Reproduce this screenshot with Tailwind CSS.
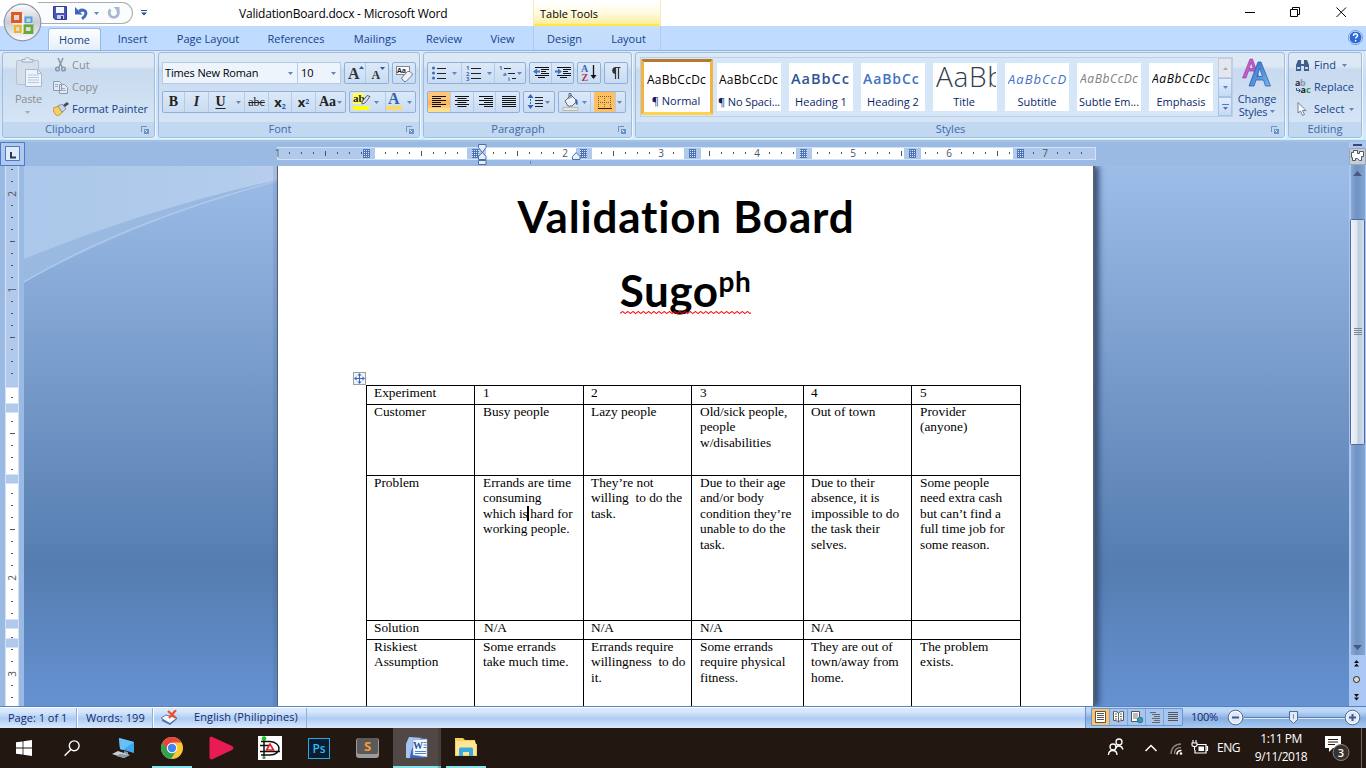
<!DOCTYPE html>
<html lang="en">
<head>
<meta charset="utf-8">
<title>ValidationBoard.docx - Microsoft Word</title>
<script src="https://cdn.jsdelivr.net/npm/@tailwindcss/browser@4"></script>
</head>
<body class="w-[1366px] h-[768px] overflow-hidden flex flex-col font-['Open_Sans',sans-serif] text-[11px] leading-[14px] text-[#15428b] whitespace-nowrap select-none">

<!-- shared shapes -->
<svg width="0" height="0" class="absolute">
  <defs>
    <symbol id="dd" viewBox="0 0 5 3"><path d="M0 0h5L2.500 3z" fill="#5e86bf"/></symbol>
    <symbol id="launch" viewBox="0 0 8 8"><path d="M.5 6V.5H6" fill="none" stroke="#6d92c4"/><path d="M3 3h5v5H3z" fill="#6d92c4"/><path d="M4 4l2 2" stroke="#fff"/></symbol>
    <pattern id="mesh" width="2" height="2" patternUnits="userSpaceOnUse"><path d="M0 0h2v2H0z" fill="#4a74b4"/><path d="M0 0h1v1H0z" fill="#dce8f8"/></pattern>
    <linearGradient id="ball" x1="0" y1="0" x2="0" y2="1"><stop offset="0" stop-color="#fdfdfe"/><stop offset=".5" stop-color="#c8ccd4"/><stop offset=".75" stop-color="#dfe3ea"/><stop offset="1" stop-color="#fff"/></linearGradient>
    <linearGradient id="sheen" x1="0" y1="0" x2="1" y2="0"><stop offset="0" stop-color="#abc7e9"/><stop offset=".8" stop-color="#b1ccec"/><stop offset="1" stop-color="#bbcdee"/></linearGradient>
    <linearGradient id="blueA" x1="0" y1="0" x2="1" y2="1"><stop offset="0" stop-color="#2f6fc4"/><stop offset="1" stop-color="#7db2ee"/></linearGradient>
  </defs>
</svg>

<!-- title bar -->
<header class="relative h-[26px] bg-white flex shrink-0">
  <div class="ml-[38px] mt-[2px] w-[95px] h-[22px] border border-[#a9adb5] border-l-0 rounded-r-full bg-[#fbfcfe] flex items-center">
    <svg class="ml-[15px]" width="14" height="14" viewBox="0 0 14 14"><path d="M.5.5h13v13H2.500L.5 12z" fill="#4a55b8" stroke="#2f3a92"/><path d="M3 1h8v6H3z" fill="#f4f7ff"/><path d="M4 9h7v4H4z" fill="#c9cfee"/><path d="M8 10h2v3H8z" fill="#2f3a92"/></svg>
    <svg class="ml-[8px]" width="13" height="13" viewBox="0 0 13 13"><path d="M4 4.200C7.500 2 11.500 3.500 10.800 7c-.4 2-1.800 3.500-3.800 4.800" fill="none" stroke="#4568b8" stroke-width="3"/><path d="M0 0v7.500h7.500z" fill="#3e66bd"/></svg>
    <svg class="ml-[6px]" width="5" height="3"><use href="#dd"/></svg>
    <svg class="ml-[8px]" width="14" height="13" viewBox="0 0 14 13"><path d="M3.500 2.500a4.600 4.600 0 1 0 6.500 0" fill="none" stroke="#a9b8cf" stroke-width="2.800"/><path d="M6.500 0h6v6z" fill="#a9b8cf"/></svg>
  </div>
  <svg class="ml-[8px] mt-[10px]" width="6" height="6" viewBox="0 0 6 6"><path d="M0 0h6v1H0zM0 2.500h6L3 5.500z" fill="#2c4f86"/></svg>
  <div class="ml-[92px] mt-[6px] w-[209px] text-[12px] leading-[16px] tracking-[-0.21px] text-black">ValidationBoard.docx - Microsoft Word</div>
  <div class="ml-[85px] w-[128px] h-[26px] border-x border-[#f5ecc0] bg-linear-to-b from-white from-10% via-[#fffae0] via-50% to-[#fdeb8b] shadow-[inset_0_-2px_0_#ffe94a] pt-[7px] pl-[6px] text-black">Table Tools</div>
  <svg class="ml-auto mr-[19px] mt-[7px]" width="102" height="11" viewBox="0 0 102 11" fill="none" stroke="#000"><path d="M0 5.500h10M45.500 2.500h7v7h-7zM47.500 2.500V.5h7v7h-2M91.500.5l9.500 9.500M101 .5L91.500 10"/></svg>
  <svg class="absolute left-[2px] top-[2px] z-10" width="42" height="42" viewBox="0 0 42 42">
    <circle cx="20.500" cy="20.500" r="18.300" fill="url(#ball)" stroke="#8d98aa" stroke-width="1.200"/>
    <g fill="none" stroke-width="2.800"><path d="M10.500 11.500h8v8h-8z" stroke="#e3571a"/><path d="M23.500 15.500h6v5.500h-6z" stroke="#58a2de" stroke-width="2"/><path d="M13 24h5.500v6H13z" stroke="#f3b51d" stroke-width="2.200"/><path d="M22.500 23.500h7.500v7h-7.500z" stroke="#6bab35"/></g>
    <path d="M21 12v19M11 21.800h20" stroke="#fff" stroke-width="1"/>
  </svg>
</header>

<!-- ribbon tabs -->
<nav class="h-[24px] bg-[#bfdbff] flex shrink-0 text-center leading-[26px]">
  <div class="ml-[48px] w-[53px] mt-[2px] h-[23px] leading-[21px] rounded-t-[3px] border border-b-0 border-[#96b9e6] bg-linear-to-b from-white to-[#e3edf9] shadow-[inset_1px_1px_0_#fff]">Home</div>
  <div class="w-[63px]">Insert</div>
  <div class="w-[88px]">Page Layout</div>
  <div class="w-[88px]">References</div>
  <div class="w-[70px]">Mailings</div>
  <div class="w-[68px]">Review</div>
  <div class="w-[55px] pr-[6px]">View</div>
  <div class="w-[128px] flex bg-linear-to-b from-[#c8dff9] to-[#bfdbff] border-x border-[#b3cbe8]"><div class="w-[61px] pl-px">Design</div><div class="w-[67px] pl-[3px]">Layout</div></div>
  <svg class="ml-auto mr-[3px] mt-[4px]" width="15" height="15" viewBox="0 0 15 15"><circle cx="7.500" cy="7.500" r="6.500" fill="#2b68d8" stroke="#fff"/><circle cx="7.500" cy="7.500" r="7" fill="none" stroke="#4f7fc8" stroke-width=".8"/><path d="M5.500 6c0-3 4.200-2.700 4-.4C9.400 7 7.600 7 7.600 8.600M7.600 10v1.500" fill="none" stroke="#fff" stroke-width="1.500"/></svg>
</nav>

<!-- ribbon -->
<section class="h-[92px] shrink-0 border-t border-[#8db2e3] bg-linear-to-b from-[#dde8f5] from-0% via-[#c9dcf1] via-30% to-[#d9e9fb] flex items-start gap-[3px] pl-[2px] pt-px relative shadow-[inset_0_-2px_0_#a7c0df,inset_0_-4px_0_#c0f2fb]">

  <!-- Clipboard -->
  <div class="w-[153px] h-[86px] rounded-[3px] border border-[#9ebbe0] bg-linear-to-b from-[#dde8f5] from-15% via-[#c8daef] via-20% to-[#d9e8f8] flex flex-col shadow-[1px_1px_0_#eef5fc]">
    <div class="h-[69px] flex text-[#8d8d8d]">
      <div class="w-[46px] pl-[2px] pt-[4px] flex flex-col items-center">
        <svg class="ml-[5px]" width="27" height="31" viewBox="0 0 27 31"><rect x=".5" y="3.500" width="22" height="24" rx="1.500" fill="#d4dfec" stroke="#b7c2d1"/><path d="M6 5V2.500h3C9 0 14 0 14 2.500h3V5z" fill="#e7edf5" stroke="#9eabbc"/><path d="M9.500 12.500h12l4 4v13h-16z" fill="#edf3fb" stroke="#a9b9cf"/><path d="M21.500 12.500v4h4" fill="none" stroke="#a9b9cf"/><path d="M12 18h11M12 20.500h11M12 23h11M12 25.500h11" stroke="#b9c8de"/></svg>
        <div class="mt-[4px] ml-[3px] tracking-[-0.2px]">Paste</div>
        <svg class="mt-[5px]" width="5" height="3" viewBox="0 0 5 3"><path d="M0 0h5L2.500 3z" fill="#a7abb3"/></svg>
      </div>
      <div class="pl-[4px] pt-[1px]">
        <div class="h-[22px] flex items-center"><svg class="ml-[2px] mr-[6px]" width="11" height="14" viewBox="0 0 11 14" fill="none" stroke="#8995a8" stroke-width="1.500"><path d="M3 0l4 9M8 0L4 9"/><circle cx="2.500" cy="11" r="1.800"/><circle cx="8.500" cy="11" r="1.800"/></svg>Cut</div>
        <div class="h-[22px] flex items-center"><svg class="mr-[4px]" width="15" height="13" viewBox="0 0 15 13" fill="#e1eaf6" stroke="#8d9aae"><path d="M.5.5h6l2 2v7h-8zM6.500 3.500h5l3 3v6h-8z"/><path d="M2 3.500h3M2 5.500h3M8 7.500h4M8 9.500h5" stroke-width=".8"/></svg>Copy</div>
        <div class="h-[22px] flex items-center text-[#15428b] tracking-[-0.05px]"><svg class="mr-[3px]" width="16" height="14" viewBox="0 0 16 14"><path d="M0 6l6-2 4 6-5 4c-2 0-5-4-5-8z" fill="#f3d05c" stroke="#a8842a" stroke-width=".7"/><path d="M5 4l4-2 4 5-4 3z" fill="#cfd4df" stroke="#6d7486" stroke-width=".7"/><path d="M10 3l4-3 2 2-4 3z" fill="#4a4a52"/></svg>Format Painter</div>
      </div>
    </div>
    <div class="h-[15px] bg-[#c1d8f0] rounded-b-[3px] flex items-center text-[#3e6aaa]"><div class="flex-1 text-center pr-[4px] pb-[2px]">Clipboard</div><svg class="mr-[5px]" width="8" height="8"><use href="#launch"/></svg></div>
  </div>

  <!-- Font -->
  <div class="w-[262px] h-[86px] rounded-[3px] border border-[#9ebbe0] bg-linear-to-b from-[#dde8f5] from-15% via-[#c8daef] via-20% to-[#d9e8f8] flex flex-col shadow-[1px_1px_0_#eef5fc]">
    <div class="h-[69px] pl-[3px] pt-[9px] flex flex-col gap-[7px]">
      <div class="flex h-[22px]">
        <div class="w-[136px] border border-[#b3cbe8] bg-[#eef4fc] flex items-center justify-between pl-[2px] pr-[4px] text-black tracking-[-0.15px]">Times New Roman<svg width="5" height="3"><use href="#dd"/></svg></div>
        <div class="w-[43px] border border-l-0 border-[#b3cbe8] bg-[#eef4fc] flex items-center justify-between pl-[3px] pr-[4px] text-black">10<svg width="5" height="3"><use href="#dd"/></svg></div>
        <div class="ml-[3px] w-[45px] border border-[#8fb0dc] rounded-[2px] bg-linear-to-b from-[#dce9f8] to-[#c9dcf3] flex font-['Liberation_Serif',serif] font-bold text-[#333]">
          <div class="w-[22px] border-r border-[#b3cbe8] text-[16px] leading-[22px] pl-[3px] relative">A<svg class="absolute left-[14px] top-[3px]" width="5" height="3" viewBox="0 0 5 3"><path d="M0 3h5L2.500 0z" fill="#2a5ba8"/></svg></div>
          <div class="w-[22px] text-[12px] leading-[24px] pl-[5px] relative">A<svg class="absolute left-[14px] top-[4px]" width="5" height="3" viewBox="0 0 5 3"><path d="M0 0h5L2.500 3z" fill="#2a5ba8"/></svg></div>
        </div>
        <div class="ml-[3px] w-[24px] border border-[#8fb0dc] rounded-[2px] bg-linear-to-b from-[#dce9f8] to-[#c9dcf3] relative">
          <div class="m-[3px] w-[14px] h-[9px] bg-white border border-[#7a8698] text-[7px] leading-[7px] font-bold text-[#222]">Aa</div>
          <svg class="absolute left-[7px] top-[7px]" width="13" height="12" viewBox="0 0 13 12"><path d="M1.500 8l6-6.500h2.500l2 2v2l-6 6H4z" fill="#f1f3f8" stroke="#6b7688"/></svg>
        </div>
      </div>
      <div class="flex h-[22px] font-['Liberation_Serif',serif] text-[#222]">
        <div class="w-[184px] border border-[#8fb0dc] rounded-[2px] bg-linear-to-b from-[#dce9f8] to-[#c9dcf3] flex items-center text-center">
          <div class="w-[22px] border-r border-[#b3cbe8] font-bold text-[14px] leading-[20px]">B</div>
          <div class="w-[24px] border-r border-[#b3cbe8] font-bold italic text-[14px] leading-[20px]">I</div>
          <div class="w-[23px] text-[14px] leading-[20px] underline underline-offset-2 font-bold">U</div>
          <div class="w-[13px] h-full flex items-center justify-center border-r border-[#b3cbe8]"><svg width="5" height="3"><use href="#dd"/></svg></div>
          <div class="w-[24px] border-r border-[#b3cbe8] text-[12px] leading-[20px] line-through">abc</div>
          <div class="w-[23px] border-r border-[#b3cbe8] font-bold text-[13px] leading-[20px] font-['Open_Sans',sans-serif]">x<sub class="text-[7px] text-[#2a5ba8]">2</sub></div>
          <div class="w-[24px] border-r border-[#b3cbe8] font-bold text-[13px] leading-[20px] font-['Open_Sans',sans-serif]">x<sup class="text-[7px] text-[#2a5ba8]">2</sup></div>
          <div class="flex-1 font-bold text-[14px] leading-[20px] flex items-center justify-center gap-px">Aa<svg width="5" height="3"><use href="#dd"/></svg></div>
        </div>
        <div class="ml-[3px] w-[67px] border border-[#8fb0dc] rounded-[2px] bg-linear-to-b from-[#dce9f8] to-[#c9dcf3] flex items-center">
          <div class="w-[36px] h-full border-r border-[#b3cbe8] relative">
            <div class="absolute left-[3px] top-px w-[11px] h-[11px] bg-[#ffff5a] text-[11px] leading-[10px] font-bold">ab</div>
            <svg class="absolute left-[10px] top-[2px]" width="11" height="11" viewBox="0 0 11 11"><path d="M2 8l5-6.500 3 1L5 9l-3 1z" fill="#dfe5ee" stroke="#56637a"/></svg>
            <div class="absolute left-[3px] top-[14px] w-[16px] h-[4px] bg-[#ffff00]"></div>
            <svg class="absolute left-[24px] top-[9px]" width="5" height="3"><use href="#dd"/></svg>
          </div>
          <div class="relative w-[29px] h-full">
            <div class="absolute left-[2px] top-0 text-[16px] leading-[14px] font-bold text-[#3465a8]">A</div>
            <div class="absolute left-0 top-[14px] w-[16px] h-[4px] bg-[#ffd966]"></div>
            <svg class="absolute left-[21px] top-[9px]" width="5" height="3"><use href="#dd"/></svg>
          </div>
        </div>
      </div>
    </div>
    <div class="h-[15px] bg-[#c1d8f0] rounded-b-[3px] flex items-center text-[#3e6aaa]"><div class="flex-1 text-center pr-[5px] pb-[2px]">Font</div><svg class="mr-[5px]" width="8" height="8"><use href="#launch"/></svg></div>
  </div>

  <!-- Paragraph -->
  <div class="w-[209px] h-[86px] rounded-[3px] border border-[#9ebbe0] bg-linear-to-b from-[#dde8f5] from-15% via-[#c8daef] via-20% to-[#d9e8f8] flex flex-col shadow-[1px_1px_0_#eef5fc]">
    <div class="h-[69px] pl-[3px] pt-[9px] flex flex-col gap-[7px]">
      <div class="flex h-[22px] gap-[3px]">
        <div class="w-[99px] border border-[#8fb0dc] rounded-[2px] bg-linear-to-b from-[#dce9f8] to-[#c9dcf3]">
          <svg width="97" height="20" viewBox="0 0 97 20"><path d="M33.500 0v20M66.500 0v20" stroke="#b3cbe8"/><g fill="#3f6ab0"><circle cx="5.500" cy="5" r="1.500"/><circle cx="5.500" cy="10" r="1.500"/><circle cx="5.500" cy="15" r="1.500"/></g><path d="M9 5.500h9M9 10.500h9M9 15.500h9M43 5.500h10M43 10.500h10M43 15.500h10M76 5.500h7M80 10.500h7M84 15.500h4" stroke="#222"/><g fill="#3f6ab0" font-family="Open Sans" font-size="6" font-weight="700"><text x="38" y="7">1</text><text x="38" y="12.500">2</text><text x="38" y="18">3</text><text x="71" y="7">1</text><text x="75" y="12.500">a</text><text x="80" y="18">i</text></g><use href="#dd" x="24" y="9" width="5" height="3"/><use href="#dd" x="59" y="9" width="5" height="3"/><use href="#dd" x="89" y="9" width="5" height="3"/></svg>
        </div>
        <div class="w-[45px] border border-[#8fb0dc] rounded-[2px] bg-linear-to-b from-[#dce9f8] to-[#c9dcf3]">
          <svg width="43" height="20" viewBox="0 0 43 20"><path d="M21.500 0v20" stroke="#b3cbe8"/><path d="M5 4.500h14M11 6.500h8M11 8.500h5M11 10.500h8M5 12.500h14M8 14.500h7M27 4.500h14M33 6.500h8M33 8.500h5M33 10.500h8M27 12.500h14M30 14.500h7" stroke="#111"/><path d="M3 8.500l4-3v2h3v2H7v2zM32 8.500l-4-3v2h-3v2h3v2z" fill="#3f74c8"/></svg>
        </div>
        <div class="w-[24px] border border-[#8fb0dc] rounded-[2px] bg-linear-to-b from-[#dce9f8] to-[#c9dcf3]">
          <svg width="22" height="20" viewBox="0 0 22 20"><text x="3" y="9" font-family="Liberation Serif" font-size="10" font-weight="700" fill="#3a66b8">A</text><text x="3.500" y="18" font-family="Liberation Serif" font-size="10" font-weight="700" fill="#b03a3a">Z</text><path d="M15.500 2v13" stroke="#111" stroke-width="1.300"/><path d="M12.500 12h6l-3 4z" fill="#111"/></svg>
        </div>
        <div class="w-[24px] border border-[#8fb0dc] rounded-[2px] bg-linear-to-b from-[#dce9f8] to-[#c9dcf3]">
          <svg width="22" height="20" viewBox="0 0 22 20"><path d="M10.500 16V4.500h5M13.500 4.500V16" stroke="#333" fill="none" stroke-width="1.200"/><path d="M11 4a3.800 3.500 0 0 0 0 7z" fill="#333"/></svg>
        </div>
      </div>
      <div class="flex h-[22px] gap-[3px]">
        <div class="w-[93px] border border-[#8fb0dc] rounded-[2px] bg-linear-to-b from-[#dce9f8] to-[#c9dcf3]">
          <svg width="91" height="20" viewBox="0 0 91 20"><path d="M0 0h22v20H0z" fill="#fdc67a"/><path d="M0 8h22v5H0z" fill="#fba63c" opacity=".5"/><path d="M0 16h22v4H0z" fill="#fde08a"/><path d="M22.500 0v20M45.500 0v20M67.500 0v20" stroke="#b3cbe8"/><path d="M4 4.500h14M4 6.500h9M4 8.500h14M4 10.500h9M4 12.500h14M4 14.500h9M27 4.500h14M29.500 6.500h9M27 8.500h14M29.500 10.500h9M27 12.500h14M29.500 14.500h9M51 4.500h14M56 6.500h9M51 8.500h14M56 10.500h9M51 12.500h14M56 14.500h9M74 4.500h14M74 6.500h14M74 8.500h14M74 10.500h14M74 12.500h14M74 14.500h14" stroke="#111"/></svg>
        </div>
        <div class="w-[32px] border border-[#8fb0dc] rounded-[2px] bg-linear-to-b from-[#dce9f8] to-[#c9dcf3]">
          <svg width="30" height="20" viewBox="0 0 30 20"><path d="M3.500 6L6.500 2l3 4zM3.500 13l3 4 3-4z" fill="#3465b8"/><path d="M6.500 4v11" stroke="#3465b8" stroke-dasharray="2 1"/><path d="M11 5.500h8M11 8.500h8M11 11.500h8M11 14.500h8" stroke="#222"/><use href="#dd" x="21" y="9" width="5" height="3"/></svg>
        </div>
        <div class="w-[68px] border border-[#8fb0dc] rounded-[2px] bg-linear-to-b from-[#dce9f8] to-[#c9dcf3]">
          <svg width="66" height="20" viewBox="0 0 66 20"><path d="M35 0h21v20H35z" fill="#fdbf5f"/><path d="M31.500 0v20M56.500 0v20" stroke="#b3cbe8"/><path d="M6 9l6-6 6 6-5 5H9z" fill="#eef2f9" stroke="#5a6b86"/><path d="M10 7V1.500h2V6" fill="none" stroke="#5a6b86"/><path d="M16 7c3 0 3 3 2.500 6-2 0-2-3-2.500-6z" fill="#3465b8"/><path d="M4 15.500h15v3H4z" fill="#e9e7dd" stroke="#a59f8c" stroke-width=".6"/><use href="#dd" x="23" y="9" width="5" height="3"/><path d="M39.500 4v12M45.500 4v12M51.500 4v12M39 4.500h13M39 10.500h13" stroke="#7b6230" stroke-dasharray="1 1"/><path d="M39 16.500h14" stroke="#222"/><use href="#dd" x="58" y="9" width="5" height="3"/></svg>
        </div>
      </div>
    </div>
    <div class="h-[15px] bg-[#c1d8f0] rounded-b-[3px] flex items-center text-[#3e6aaa]"><div class="flex-1 text-center pr-[6px] pb-[2px]">Paragraph</div><svg class="mr-[5px]" width="8" height="8"><use href="#launch"/></svg></div>
  </div>

  <!-- Styles -->
  <div class="w-[650px] h-[86px] rounded-[3px] border border-[#9ebbe0] bg-linear-to-b from-[#dde8f5] from-15% via-[#c8daef] via-20% to-[#d9e8f8] flex flex-col shadow-[1px_1px_0_#eef5fc]">
    <div class="h-[69px] flex">
      <div class="ml-[4px] mt-[4px] w-[593px] h-[60px] border border-[#b9d0ed] bg-[#d4e6f8] flex">
        <div class="w-[72px] h-[56px] mt-px border-[3px] border-[#f4b23e] border-t-[#b8792e] border-b-[#fdd34a] rounded-[2px] bg-white overflow-hidden text-center text-[#0a1f6b]"><div class="mt-[10px] ml-[3px] w-[59px] h-[16px] overflow-hidden text-left text-[12px] leading-[16px] tracking-[0.250px] text-black">AaBbCcDc</div><div class="mt-[6px] pr-[2px]">¶ Normal</div></div>
        <div class="ml-[4px] mt-[5px] flex gap-[8px] text-center text-[#0a1f6b]">
          <div class="w-[64px] h-[48px] bg-white overflow-hidden"><div class="mt-[9px] ml-[2px] w-[59px] h-[16px] overflow-hidden text-left text-[12px] leading-[16px] tracking-[0.250px] text-black">AaBbCcDc</div><div class="mt-[7px] tracking-[-0.1px]">¶ No Spaci...</div></div>
          <div class="w-[64px] h-[48px] bg-white overflow-hidden"><div class="mt-[7px] ml-[2px] w-[60px] h-[18px] overflow-hidden text-left text-[14.500px] leading-[18px] tracking-[1px] font-semibold text-[#2f5496]">AaBbCc</div><div class="mt-[7px]">Heading 1</div></div>
          <div class="w-[64px] h-[48px] bg-white overflow-hidden"><div class="mt-[7px] ml-[2px] w-[61px] h-[18px] overflow-hidden text-left text-[14px] leading-[18px] tracking-[0.900px] font-semibold text-[#4472c4]">AaBbCc</div><div class="mt-[7px]">Heading 2</div></div>
          <div class="w-[64px] h-[48px] bg-white overflow-hidden"><div class="mt-[2px] ml-[3px] w-[60px] h-[24px] overflow-hidden text-left text-[28px] leading-[22px] tracking-[0.700px] font-light text-[#323e4f]">AaBb</div><div class="mt-[6px] pr-[2px]">Title</div></div>
          <div class="w-[64px] h-[48px] bg-white overflow-hidden"><div class="mt-[8px] ml-[3px] w-[59px] h-[16px] overflow-hidden text-left text-[13px] leading-[16px] italic tracking-[1px] text-[#4472c4]">AaBbCcD</div><div class="mt-[8px]">Subtitle</div></div>
          <div class="w-[64px] h-[48px] bg-white overflow-hidden"><div class="mt-[8px] ml-[3px] w-[58px] h-[16px] overflow-hidden text-left text-[12px] leading-[16px] italic tracking-[0.600px] text-[#808080]">AaBbCcDc</div><div class="mt-[8px]">Subtle Em...</div></div>
          <div class="w-[64px] h-[48px] bg-white overflow-hidden"><div class="mt-[8px] ml-[3px] w-[58px] h-[16px] overflow-hidden text-left text-[12px] leading-[16px] italic tracking-[0.600px] text-black">AaBbCcDc</div><div class="mt-[8px]">Emphasis</div></div>
        </div>
        <div class="ml-[5px] flex flex-col w-[14px]">
          <div class="h-[20px] border border-[#c5cdd8] bg-[#e4e8ee] flex items-center justify-center"><svg width="5" height="3" viewBox="0 0 5 3"><path d="M0 3h5L2.500 0z" fill="#a5adb8"/></svg></div>
          <div class="h-[19px] border border-[#a9c3e6] bg-linear-to-b from-[#e3eefb] to-[#c4daf4] flex items-center justify-center"><svg width="5" height="3"><use href="#dd"/></svg></div>
          <div class="h-[19px] border border-[#a9c3e6] bg-linear-to-b from-[#e3eefb] to-[#c4daf4] flex items-center justify-center"><svg width="7" height="6" viewBox="0 0 7 6"><path d="M0 0h7v1H0zM1 3h5L3.500 6z" fill="#4f7bb8"/></svg></div>
        </div>
      </div>
      <div class="ml-[2px] w-[44px] pt-[5px] flex flex-col items-center leading-[13px]">
        <svg width="30" height="29" viewBox="0 0 30 29"><path d="M.5 20L8 1h2.500l6 17h-3l-1.700-5H6.500L4 20zM7 10.500h4.200L9.200 4.500z" fill="#c45bc9" stroke="#8f2f98" stroke-width=".6"/><path d="M7 28l9-24h3l9.500 24h-5l-2-6h-7.500l-2 6zM15 18.500h5.500l-2.700-8.500z" fill="url(#blueA)" stroke="#2a62b4" stroke-width=".8"/></svg>
        <div class="mt-[5px]">Change</div>
        <div class="flex items-center gap-[3px] tracking-[-0.2px]">Styles<svg width="5" height="3"><use href="#dd"/></svg></div>
      </div>
    </div>
    <div class="h-[15px] bg-[#c1d8f0] rounded-b-[3px] flex items-center text-[#3e6aaa]"><div class="flex-1 text-center pr-[6px] pb-[2px]">Styles</div><svg class="mr-[5px]" width="8" height="8"><use href="#launch"/></svg></div>
  </div>

  <!-- Editing -->
  <div class="w-[74px] h-[86px] rounded-[3px] border border-[#9ebbe0] bg-linear-to-b from-[#dde8f5] from-15% via-[#c8daef] via-20% to-[#d9e8f8] flex flex-col shadow-[1px_1px_0_#eef5fc]">
    <div class="h-[69px] pl-[6px] pt-[1px]">
      <div class="h-[22px] flex items-center"><svg class="mr-[4px]" width="15" height="13" viewBox="0 0 15 13"><path d="M1 6l2-5h3v4h3V1h3l2 5v6H9V7H6v5H1z" fill="#3f5f8f"/><path d="M2 9h3M10 9h3" stroke="#c9d7ea" stroke-width="2"/></svg>Find<svg class="ml-[6px]" width="5" height="3"><use href="#dd"/></svg></div>
      <div class="h-[22px] flex items-center"><svg class="mr-[3px]" width="16" height="16" viewBox="0 0 16 16"><g font-family="Open Sans" font-weight="700" font-size="9"><text x="0" y="7" fill="#333">a</text><text x="5" y="7" fill="#8a98ad">b</text><text x="5.500" y="14" fill="#222">a</text><text x="11" y="14" fill="#1f9a37">c</text></g><path d="M1.500 9v2.500h3.500M3.500 9.500l2 2-2 2" fill="none" stroke="#2f5b9c"/></svg>Replace</div>
      <div class="h-[22px] flex items-center"><svg class="ml-[2px] mr-[7px]" width="10" height="14" viewBox="0 0 10 14"><path d="M1 .5v10.500l2.500-2 2 4.500 2-1-2-4h3.500z" fill="#fff" stroke="#6d7f9c"/></svg>Select<svg class="ml-[5px]" width="5" height="3"><use href="#dd"/></svg></div>
    </div>
    <div class="h-[15px] bg-[#c1d8f0] rounded-b-[3px] text-center leading-[13px] text-[#3e6aaa]">Editing</div>
  </div>
</section>

<!-- document area -->
<div class="flex h-[564px] shrink-0 bg-[#9bbae3]">
  <!-- vertical ruler -->
  <svg class="shrink-0" width="24" height="564" viewBox="0 142 24 564">
    <path d="M0 142h24v564H0z" fill="#9bbae3"/>
    <path d="M5 166h14v540H5z" fill="#d3e2f7"/><path d="M6 166h12v221H6z" fill="#b1c9ea"/>
    <path d="M6 388h12v15H6zM6 413h12v61H6zM6 484h12v135H6zM6 629h12v9H6zM6 648h12v58H6z" fill="#fff"/>
    <path d="M6 404h12v8H6zM6 475h12v8H6zM6 620h12v8H6zM6 639h12v8H6z" fill="#b1c9ea"/>
    <path d="M11 169.500h2M11 181.500h2M11 205.500h2M11 217.500h2M11 229.500h2M10 241.500h5M11 253.500h2M11 265.500h2M11 277.500h2M11 301.500h2M11 313.500h2M11 325.500h2M10 337.500h5M11 349.500h2M11 361.500h2M11 373.500h2M11 397.500h2M11 421.500h2M10 433.500h5M11 445.500h2M11 457.500h2M11 469.500h2M11 493.500h2M11 505.500h2M11 517.500h2M10 529.500h5M11 541.500h2M11 553.500h2M11 565.500h2M11 589.500h2M11 601.500h2M11 613.500h2M11 637.500h2M11 649.500h2M11 661.500h2M11 685.500h2M11 697.500h2" stroke="#4c5460"/>
    <g font-family="Open Sans" font-size="10" fill="#4c5460" text-anchor="middle"><text transform="translate(16 194) rotate(-90)">2</text><text transform="translate(16 290) rotate(-90)">1</text><text transform="translate(16 578) rotate(-90)">2</text><text transform="translate(16 674) rotate(-90)">3</text></g>
    <path d="M.5 142.500h24v23H.5z" fill="#b1c9ea" stroke="#4a7acb"/><path d="M5.500 146.500h14v14h-14z" fill="#e2ecf8" stroke="#4a7acb"/><path d="M11 152v5.500h5" fill="none" stroke="#223a6a" stroke-width="2"/>
  </svg>
  <div class="w-[1325px] flex flex-col">
    <!-- horizontal ruler -->
    <svg class="shrink-0" width="1325" height="24" viewBox="24 142 1325 24">
      <path d="M24 142h1v24h-1z" fill="#4a7acb"/>
      <path d="M277 147h819v13H277z" fill="#d3e2f7"/><path d="M278 148h817v11H278z" fill="#b1c9ea"/>
      <path d="M375 148h92v11h-92zM486 148h90v11h-90zM592 148h92v11h-92zM701 148h95v11h-95zM812 148h92v11h-92zM921 148h92v11h-92z" fill="#fff"/>
      <path d="M289.500 152v2M301.500 152v2M313.500 152v2M325.500 151v5M337.500 152v2M349.500 152v2M361.500 152v2M385.500 152v2M397.500 152v2M409.500 152v2M421.500 151v5M433.500 152v2M445.500 152v2M457.500 152v2M493.500 152v2M505.500 152v2M517.500 151v5M529.500 152v2M541.500 152v2M553.500 152v2M601.500 152v2M613.500 151v5M625.500 152v2M637.500 152v2M649.500 152v2M673.500 152v2M709.500 151v5M721.500 152v2M733.500 152v2M745.500 152v2M769.500 152v2M781.500 152v2M793.500 152v2M817.500 152v2M829.500 152v2M841.500 152v2M865.500 152v2M877.500 152v2M889.500 152v2M901.500 151v5M925.500 152v2M937.500 152v2M961.500 152v2M973.500 152v2M985.500 152v2M997.500 151v5M1009.500 152v2M1033.500 152v2M1057.500 152v2M1069.500 152v2M1081.500 152v2" stroke="#4c5460"/>
      <path d="M363 149h7v9h-7zM472 149h7v9h-7zM580 149h7v9h-7zM689 149h7v9h-7zM800 149h7v9h-7zM909 149h7v9h-7zM1017 149h7v9h-7z" fill="url(#mesh)"/>
      <g font-family="Open Sans" font-size="10" fill="#4c5460" text-anchor="middle"><text x="277.500" y="157">1</text><text x="565" y="157">2</text><text x="661" y="157">3</text><text x="757" y="157">4</text><text x="853" y="157">5</text><text x="949" y="157">6</text><text x="1045" y="157">7</text></g>
      <g fill="#e8eef8" stroke="#4a6fae"><path d="M478.500 144.500h7.500v3l-3.700 5-3.800-5zM478.500 159.500v-3l3.800-4 3.700 4v3zM478.500 160.500h7.500v4h-7.500zM572.500 159.500v-3l3.700-4 3.800 4v3z"/></g><path d="M530.500 161v3" stroke="#6e88ad"/>
    </svg>
    <!-- page canvas -->
    <main class="relative h-[540px] flex overflow-hidden bg-linear-to-b from-[#9dbde8] from-0% via-[#557db0] via-74% to-[#6592d2]">
      <svg class="shrink-0" width="253" height="540" viewBox="24 166 253 540">
        <path d="M24 166h253v15Q140 220 24 282z" fill="#9ab9e1"/>
        <path d="M24 166h253v14Q150 208 24 259z" fill="url(#sheen)"/>
        <path d="M277 181Q125 222 24 282" fill="none" stroke="#b3cbed" stroke-width="1.200"/>
        <path d="M273 166h4v540h-4z" fill="#3c5c8a" opacity=".12"/>
      </svg>
      <article class="w-[818px] h-full shrink-0 bg-white border-l border-r-2 border-[#56606e] text-black shadow-[4px_0_6px_#35507a]">
        <h1 class="mt-[22px] h-[56px] leading-[56px] text-center font-['Lato',sans-serif] font-bold text-[44px] tracking-[0.800px] pl-[1px]">Validation Board</h1>
        <div class="mt-[18px] h-[56px] leading-[56px] flex justify-center font-['Lato',sans-serif] font-bold text-[44px] tracking-[0.500px]">
          <div class="relative flex"><span>Sugo</span><span class="text-[28px] leading-[38px]">ph</span>
            <svg class="absolute left-0 bottom-[4px] w-full h-[3px]" viewBox="0 0 101 3" preserveAspectRatio="none"><path d="M0 2.500L2 .5l2 2 2-2 2 2 2-2 2 2 2-2 2 2 2-2 2 2 2-2 2 2 2-2 2 2 2-2 2 2 2-2 2 2 2-2 2 2 2-2 2 2 2-2 2 2 2-2 2 2 2-2 2 2 2-2 2 2 2-2 2 2 2-2 2 2 2-2 2 2 2-2 2 2 2-2 2 2 2-2 2 2 2-2 2 2 2-2 2 2 2-2 2 2 2-2 2 2 2-2" fill="none" stroke="#f00" stroke-width=".9"/></svg>
          </div>
        </div>
        <div class="ml-[75px] mt-[54px] h-[13px] w-[13px] border border-[#9aa0a8] bg-[#eef1f6]"><svg width="11" height="11" viewBox="0 0 11 11"><path d="M5.500 1.500v8M1.500 5.500h8" stroke="#3a66c0"/><path d="M5.500 0L3.500 2.500h4zM5.500 11l-2-2.500h4zM0 5.500l2.500-2v4zM11 5.500l-2.500-2v4z" fill="#3a66c0"/></svg></div>
        <!-- experiment table -->
        <div class="ml-[88px] w-[655px] grid grid-cols-[108px_109px_108px_112px_108px_109px] grid-rows-[19px_71px_145px_19px_90px] border-l border-black font-['Liberation_Serif',serif] text-[13.330px] leading-[15.400px] *:border-r *:border-black *:pl-[7px] *:shadow-[inset_0_1px_0_#000]">
          <div>Experiment</div><div class="indent-px">1</div><div>2</div><div class="indent-px">3</div><div>4</div><div class="indent-px">5</div>
          <div>Customer</div><div><p class="pl-px">Busy people</p></div><div>Lazy people</div><div><p class="pl-px">Old/sick people,<br>people<br>w/disabilities</p></div><div>Out of town</div><div><p class="pl-px">Provider<br>(anyone)</p></div>
          <div>Problem</div><div><p class="pl-px">Errands are time<br>consuming<br>which is<span class="inline-block w-[2px] h-[15px] -mb-[3px] -mr-[2px] -ml-px bg-black"></span> hard for<br>working people.</p></div><div>They’re not<br>willing&nbsp; to do the<br>task.</div><div><p class="pl-px">Due to their age<br>and/or body<br>condition they’re<br>unable to do the<br>task.</p></div><div>Due to their<br>absence, it is<br>impossible to do<br>the task their<br>selves.</div><div><p class="pl-px">Some people<br>need extra cash<br>but can’t find a<br>full time job for<br>some reason.</p></div>
          <div>Solution</div><div><p class="pl-[2px]">N/A</p></div><div>N/A</div><div><p class="pl-px">N/A</p></div><div>N/A</div><div></div>
          <div>Riskiest<br>Assumption</div><div><p class="pl-px">Some errands<br>take much time.</p></div><div>Errands require<br>willingness&nbsp; to do<br>it.</div><div><p class="pl-px">Some errands<br>require physical<br>fitness.</p></div><div>They are out of<br>town/away from<br>home.</div><div><p class="pl-px">The problem<br>exists.</p></div>
        </div>
      </article>
    </main>
  </div>
  <!-- vertical scrollbar -->
  <svg class="shrink-0" width="17" height="564" viewBox="1349 142 17 564">
    <defs><linearGradient id="trk" x1="0" x2="1" y1="0" y2="0"><stop offset="0" stop-color="#89a9d3"/><stop offset=".4" stop-color="#6f93c4"/><stop offset="1" stop-color="#84a5d2"/></linearGradient><linearGradient id="thumb" x1="0" x2="1" y1="0" y2="0"><stop offset="0" stop-color="#f2f5f9"/><stop offset=".45" stop-color="#dfe6ef"/><stop offset=".55" stop-color="#bccde0"/><stop offset="1" stop-color="#d3dfec"/></linearGradient></defs>
    <path d="M1349 142h17v564h-17z" fill="#a9c7f2"/>
    <path d="M1351 165h14v490h-14z" fill="url(#trk)"/>
    <path d="M1353 144h9v2h-9z" fill="#3b4a70"/><path d="M1349.500 148.500h16v16h-16z" fill="#c7ccd6" stroke="#9aa6ba"/><path d="M1351.500 152.500h2v-2h4v3h2v-2h4v5h-2v4h-2l-2-2h-2v2h-3v-3h-1z" fill="#fff" stroke="#3d4a5e" stroke-width=".9"/>
    <path d="M1353 176h9l-4.500-5zM1353 645h9l-4.500 5z" fill="#485a82"/>
    <rect x="1350.500" y="219.500" width="14" height="225" rx="1" fill="url(#thumb)" stroke="#5468a0"/>
    <path d="M1354 328.500h8M1354 330.500h8M1354 332.500h8M1354 334.500h8" stroke="#7d8692"/>
    <path d="M1354 663l2.500-3 2.500 3zM1354 666.500l2.500-3 2.500 3zM1354 694l2.500 3 2.500-3zM1354 697.500l2.500 3 2.500-3z" fill="#111"/>
    <circle cx="1356.500" cy="679.500" r="3" fill="#dcd9cf" stroke="#222"/>
  </svg>
</div>

<!-- status bar -->
<div class="h-[22px] shrink-0 border-t border-[#5583bd] bg-linear-to-b from-[#d9e8fb] from-20% via-[#aecdf5] via-55% to-[#dbe9fb] flex items-center text-[#15286b] shadow-[inset_0_1px_0_#fff]">
  <div class="w-[77px] h-[20px] pl-[8px] leading-[19px] border-r border-[#8eb0dd]">Page: 1 of 1</div>
  <div class="w-[76px] h-[20px] pl-[8px] leading-[19px] border-r border-[#8eb0dd] border-l border-l-white tracking-[0.1px]">Words: 199</div>
  <div class="w-[154px] h-[20px] pl-[7px] pb-px border-r border-[#8eb0dd] border-l border-l-white flex items-center tracking-[0.1px]">
    <svg class="mr-[16px]" width="17" height="15" viewBox="0 0 17 15"><path d="M0 8l5-3 11 3-7 6z" fill="#f4f7fc" stroke="#5e7bb0"/><path d="M1 9v2l8 4 7-6V8l-7 5z" fill="#4d74b8"/><path d="M7 1l8 7M15 0L8 8" stroke="#e8502c" stroke-width="2.200"/></svg>English (Philippines)</div>
  <div class="ml-auto w-[281px] h-[21px] bg-linear-to-b from-[#bdd7f8] from-20% via-[#86aee0] via-55% to-[#a9caf2] border-l border-[#6c94cb] flex items-center">
    <svg class="ml-[5px]" width="92" height="19" viewBox="0 0 92 19"><path d="M.5.5h91v17H.5z" fill="#a6c6ef" stroke="#6c94cb"/><path d="M1 1h17v16H1z" fill="#fbc468"/><path d="M18.500 1v16M36.500 1v16M54.500 1v16M72.500 1v16" stroke="#7ea4d8"/><path d="M4.500 3.500h10v11h-10z" fill="#fff" stroke="#555"/><path d="M6 5.500h7M6 7.500h7M6 9.500h7M6 11.500h7" stroke="#555"/><path d="M27.500 5c-2-2-4-1.500-5-1.500v9c2 0 4 0 5 1.500 1-1.500 3-1.500 5-1.500v-9c-1 0-3-.5-5 1.500z" fill="#fff" stroke="#555"/><path d="M27.500 5v9M24 6h2M24 8.500h2M24 11h2M29 6h2M29 8.500h2M29 11h2" stroke="#555" stroke-width=".9"/><path d="M40.500 3.500h8v10h-8z" fill="#fff" stroke="#555"/><path d="M42 6h5M42 8h5M42 10h4" stroke="#555" stroke-width=".8"/><circle cx="49" cy="12" r="3.200" fill="#2f7cc4"/><path d="M47 11l3-1 1 3-2 1z" fill="#3fae55"/><path d="M59 4.500h6M61 6.500h8M63 8.500h6M61 10.500h8M63 12.500h6M61 14.500h8" stroke="#666"/><path d="M77 4.500h10M77 6.500h10M77 8.500h10M77 10.500h10M77 12.500h10" stroke="#555"/></svg>
    <div class="ml-[8px] w-[28px] tracking-[-0.3px] pb-[2px]">100%</div>
    <svg class="ml-[7px] mb-px" width="136" height="19" viewBox="0 0 136 19"><path d="M18 9.500h101" stroke="#5c80b4"/><path d="M18 10.500h101" stroke="#dbe8f9"/><circle cx="9.500" cy="9.500" r="7.300" fill="#dfe7f3" stroke="#4d6a98"/><circle cx="9.500" cy="9.500" r="6" fill="none" stroke="#fff"/><path d="M6 9.500h7" stroke="#3d5b8d" stroke-width="2"/><circle cx="126.500" cy="9.500" r="7.300" fill="#dfe7f3" stroke="#4d6a98"/><circle cx="126.500" cy="9.500" r="6" fill="none" stroke="#fff"/><path d="M123 9.500h7M126.500 6v7" stroke="#3d5b8d" stroke-width="2"/><path d="M63.500 3.500h8v8l-4 4-4-4z" fill="#e3ebf7" stroke="#4d6a98"/><path d="M67.500 6v5" stroke="#7a93bb"/></svg>
  </div>
</div>

<!-- taskbar -->
<footer class="h-[40px] shrink-0 bg-[#221711] flex items-center text-white">
  <div class="w-[48px] flex justify-center"><svg width="16" height="16" viewBox="0 0 16 16" fill="#fff"><path d="M0 2.300L6.600 1.400v6.200H0zM7.400 1.300L16 0v7.600H7.400zM0 8.400h6.600v6.200L0 13.700zM7.400 8.400H16V16l-8.600-1.300z"/></svg></div>
  <div class="w-[48px] flex justify-center"><svg width="16" height="17" viewBox="0 0 16 17" fill="none" stroke="#fff" stroke-width="1.400"><circle cx="10.200" cy="5.800" r="4.900"/><path d="M6.800 9.500L.6 15.800"/></svg></div>
  <div class="w-[51px] pl-[3px] flex justify-center"><svg width="23" height="22" viewBox="0 0 23 22"><path d="M7 1l15 4v11L8 12z" fill="#3fa7ee"/><path d="M7 1l15 4-11 8-3-1z" fill="#68c0f8"/><path d="M12 14l4 1v3l-4-1z" fill="#8d959e"/><path d="M0 17l6-3 12 4-6 3z" fill="#c7d0d9"/><path d="M8 17l9 1-5 3-8-2z" fill="#8e98a3"/></svg></div>
  <div class="ml-[5px] w-[40px] h-[40px] border-b-2 border-[#86e3ea] flex items-center justify-center"><svg class="mt-[2px]" width="22" height="22" viewBox="0 0 22 22"><circle cx="11" cy="11" r="11" fill="#fcc934"/><path d="M1.500 5.500A11 11 0 0 1 20.500 5.500H11L6 13.500z" fill="#e8453c"/><path d="M1.500 5.500A11 11 0 0 0 10 22l5.500-8.500-8 1z" fill="#31a350"/><circle cx="11" cy="11" r="5.200" fill="#fff"/><circle cx="11" cy="11" r="4.200" fill="#4285f4"/></svg></div>
  <div class="w-[58px] flex justify-center"><svg width="25" height="24" viewBox="0 0 25 24"><path d="M.5 2.500C.5.5 2 .5 3.500 1L23 10c2 1 2 3 0 4L4 23c-2 1-3.500 0-3.500-2z" fill="#e81c52"/></svg></div>
  <div class="w-[40px] flex justify-center"><svg width="24" height="24" viewBox="0 0 24 24"><path d="M0 0h24v24H0z" fill="#fff"/><path d="M6 3v17M3 5.500h9c12 1 12 13 0 13.500H3M2 9.500h9M2 15.500h20" fill="none" stroke="#111" stroke-width="1.500"/><path d="M8.500 14L12 8l3.500 6z" fill="none" stroke="#e02020" stroke-width="1.600"/><circle cx="6" cy="2.500" r="2.300" fill="#15c51e"/><circle cx="6" cy="21.500" r="1.600" fill="#4f8f52"/></svg></div>
  <div class="w-[58px] flex justify-center"><div class="w-[22px] h-[21px] border border-[#2ea6e6] bg-[#061e30] text-[#38b6f5] text-[12px] leading-[19px] text-center font-semibold">Ps</div></div>
  <div class="w-[40px] flex justify-center pr-px"><svg width="23" height="22" viewBox="0 0 23 22"><rect y="1" width="23" height="20" rx="3" fill="#9b9b9b"/><rect x="1" y="1" width="21" height="16" rx="2" fill="#5a5a5a"/><text x="11.500" y="14" font-family="Open Sans" font-weight="700" font-size="13" text-anchor="middle" fill="#fb9a34">S</text></svg></div>
  <div class="ml-[5px] w-[45px] h-[40px] bg-[#514845] border-b-2 border-[#86e3ea] flex items-center justify-center pl-[2px]"><svg width="23" height="23" viewBox="0 0 23 23"><path d="M4 1l15 1v20H1V8z" fill="#3566b8"/><path d="M4 1l13 1C9 6 6 12 5 22H1V8z" fill="#a7c3ef"/><path d="M8 4l14-1v18l-14-2z" fill="#f5f8fd" stroke="#8aa5d0" stroke-width=".6"/><text x="8" y="13" font-family="Liberation Serif" font-weight="700" font-size="10" fill="#23529f">W</text><path d="M18.500 6.500h3M18.500 9h3M18.500 11.500h3M10 15.500h11M10 17.500h11" stroke="#5580c5"/></svg></div>
  <div class="w-[3px] h-[40px] bg-[#483e3a] border-b-2 border-[#6fb5ba]"></div>
  <div class="ml-[5px] w-[40px] h-[40px] border-b-2 border-[#86e3ea] flex items-center justify-center"><svg width="22" height="20" viewBox="0 0 22 20"><path d="M0 1h8l2 2h10v4h2v12H0z" fill="#f7ce5a"/><path d="M1 4h19l1 3v11H1z" fill="#ffe693"/><path d="M4 19v-7q0-1.500 1.500-1.500h11Q18 10.500 18 12v7h-4v-4H8v4z" fill="#39a9e3"/></svg></div>
  <svg class="ml-auto mr-[-42px]" width="154" height="24" viewBox="-1 0 154 24" fill="none" stroke="#fff" stroke-width="1.300">
    <circle cx="13" cy="6" r="3"/><path d="M9.500 12.500c1-3.500 6-3.500 7.500 1"/><circle cx="7" cy="11" r="3"/><path d="M2.500 19c0-6 8.500-6 8.500 0"/>
    <path d="M39.500 15l5.500-5.500 5.500 5.500" stroke-width="1.500"/>
    <path d="M65 18c0-6 4-10 10-10M68.500 18c0-4 2.500-6.500 6.500-6.500" stroke="#8d8580"/><path d="M71 18.500c0-2.500 1.500-4 4.500-4" stroke-width="1.700"/><circle cx="75" cy="17.500" r="1.300" fill="#fff" stroke="none"/>
    <path d="M91 8.500h9v8.500H89v-3M100 10.500h1.500v4H100" stroke-width="1.200"/><path d="M92.500 10.500h5.500v4.500h-5.500z" fill="#fff" stroke="none"/><path d="M87 4v3M90 4v3M86 7h5v2c0 2-5 2-5 0zM88.500 11v3" stroke-width="1.100"/>
  </svg>
  <div class="w-[24px] text-[12px] tracking-[-0.5px]">ENG</div>
  <div class="ml-[6px] w-[68px] text-center text-[12px] leading-[18px] tracking-[-0.5px]">1:11 PM<br>9/11/2018</div>
  <svg class="ml-[9px]" width="26" height="28" viewBox="0 0 26 28"><path d="M1 2h16v12H9l-4 4v-4H1z" fill="#fff"/><path d="M4 5.500h10M4 8h10M4 10.500h7" stroke="#221711"/><circle cx="17" cy="18.500" r="8" fill="#373230" stroke="#8b8683"/><text x="17" y="22.500" font-family="Open Sans" font-size="11" font-weight="600" text-anchor="middle" fill="#fff">3</text></svg>
  <div class="ml-[11px] mr-[4px] w-px h-[40px] bg-[#6a625e]"></div>
</footer>
</body>
</html>
